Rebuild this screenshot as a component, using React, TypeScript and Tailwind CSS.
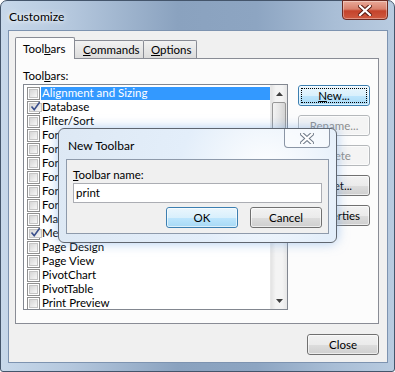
import React from "react";

const items: { name: string; checked?: boolean; selected?: boolean }[] = [
  { name: "Alignment and Sizing", selected: true },
  { name: "Database", checked: true },
  { name: "Filter/Sort" },
  { name: "Form Design" },
  { name: "Form View" },
  { name: "Formatting (Datasheet)" },
  { name: "Formatting (Form/Report)" },
  { name: "Formatting (Page)" },
  { name: "Formatting (PivotTable/PivotChart)" },
  { name: "Macro Design" },
  { name: "Menu Bar", checked: true },
  { name: "Page Design" },
  { name: "Page View" },
  { name: "PivotChart" },
  { name: "PivotTable" },
  { name: "Print Preview" },
];

function Check({ checked }: { checked?: boolean }) {
  return (
    <span className="w-[13px] h-[13px] shrink-0 border border-[#8f8f8f] bg-white p-[1px] flex">
      <span className="flex-1 border border-[#c4c4c4] bg-gradient-to-br from-[#d6d6d6] to-[#f7f7f7] flex items-center justify-center">
        {checked && (
          <svg width="11" height="11" viewBox="0 0 11 11" className="-mt-[1px]">
            <path d="M1.5 5.5 L4.2 8.6 L9.6 1.2" fill="none" stroke="#3a4f8c" strokeWidth="1.6" />
          </svg>
        )}
      </span>
    </span>
  );
}

function Btn({
  children,
  def,
  disabled,
  focus,
  w = "w-[72px]",
}: {
  children: React.ReactNode;
  def?: boolean;
  disabled?: boolean;
  focus?: boolean;
  w?: string;
}) {
  const border = disabled
    ? "border-[#b5b8bb]"
    : def
    ? "border-[#3c7fb1]"
    : "border-[#707070]";
  const bg = disabled
    ? "bg-[#f4f4f4]"
    : def
    ? "bg-[linear-gradient(#eaf6fd_0%,#d9f0fc_50%,#bee6fd_51%,#a7d9f5_100%)]"
    : "bg-[linear-gradient(#f2f2f2_0%,#ebebeb_50%,#dddddd_51%,#cfcfcf_100%)]";
  return (
    <div
      className={`${w} h-[21px] rounded-[3px] border ${border} ${bg} flex items-center justify-center relative ${
        disabled ? "text-[#8d8d8d]" : "text-black"
      }`}
    >
      <div className="absolute inset-0 rounded-[2px] border border-white/60" />
      {focus && <div className="absolute inset-[2px] border border-dotted border-black" />}
      <span className="relative leading-none text-[11.5px]">{children}</span>
    </div>
  );
}

function CloseX({ red }: { red?: boolean }) {
  return (
    <svg width="14" height="11" viewBox="0 0 14 11">
      <path
        d="M2 1 L12 10 M12 1 L2 10"
        stroke={red ? "#5a1b12" : "#6f7a88"}
        strokeWidth="4.2"
        strokeLinecap="square"
      />
      <path d="M2 1 L12 10 M12 1 L2 10" stroke="#ffffff" strokeWidth="2.2" strokeLinecap="square" />
    </svg>
  );
}

export default function App() {
  return (
    <div className="relative w-[395px] h-[372px] bg-white font-['Lato',sans-serif] text-[11px] text-black overflow-hidden">
      {/* main window */}
      <div className="w-full h-full rounded-t-[7px] rounded-b-[3px] border border-[#44556b] bg-[linear-gradient(90deg,#c7d8ea_0%,#b4c7dd_18%,#8aa2bf_45%,#8da5c2_65%,#a9bed6_85%,#b8cbe0_100%)] flex flex-col pl-[7px] pr-[6px] pb-[8px]">
        {/* title bar */}
        <div className="h-[29px] shrink-0 flex items-start">
          <span className="mt-[7px] ml-[1px] text-[12px] text-black [text-shadow:0_0_8px_#ffffff,0_0_4px_#ffffff]">
            Customize
          </span>
          <div className="ml-auto mr-[0px] -mt-[1px] w-[46px] h-[20px] rounded-b-[4px] border border-[#6b2a22] bg-[linear-gradient(#e9a999_0%,#d9816d_45%,#c4432b_55%,#cf5a40_100%)] flex items-center justify-center shadow-[inset_0_0_0_1px_rgba(255,255,255,0.35)]">
            <CloseX red />
          </div>
        </div>
        {/* client area */}
        <div className="flex-1 border border-[#7d93b0] bg-[#f0f0f0] flex flex-col px-[6px]">
          {/* tabs */}
          <div className="h-[21px] mt-[6px] flex items-end shrink-0 relative z-10">
            <div className="w-[60px] h-[22px] -mb-[1px] border border-b-0 border-[#898c95] bg-[#fcfcfc] rounded-t-[2px] flex items-start pl-[7px] pt-[4px]">
              <span className="leading-[13px] text-[11.5px]">
                Tool<span className="underline">b</span>ars
              </span>
            </div>
            <div className="w-[69px] h-[18px] border border-l-0 border-b-0 border-[#898c95] bg-[linear-gradient(#f2f2f2,#dcdcdc)] rounded-tr-[2px] flex items-start pl-[8px] pt-[2px]">
              <span className="leading-[13px] text-[11.5px]">
                <span className="underline">C</span>ommands
              </span>
            </div>
            <div className="w-[53px] h-[18px] border border-l-0 border-b-0 border-[#898c95] bg-[linear-gradient(#f2f2f2,#dcdcdc)] rounded-tr-[2px] flex items-start pl-[7px] pt-[2px]">
              <span className="leading-[13px] text-[11.5px]">
                <span className="underline">O</span>ptions
              </span>
            </div>
          </div>
          {/* panel */}
          <div className="w-[364px] h-[266px] border border-[#898c95] bg-[#fcfcfc] flex flex-col pl-[7px]">
            <div className="h-[25px] pt-[10px] leading-[13px] text-[11.5px]">
              Tool<span className="underline">b</span>ars:
            </div>
            <div className="flex">
              {/* list */}
              <div className="w-[265px] h-[226px] border border-[#828790] bg-white flex overflow-hidden">
                <div className="flex-1 pt-[1px] pl-[3px] flex flex-col overflow-hidden">
                  {items.map((it) => (
                    <div key={it.name} className="h-[14px] shrink-0 flex items-center">
                      <Check checked={it.checked} />
                      <span
                        className={`ml-[1px] h-[13px] flex items-center whitespace-nowrap pl-[1px] leading-none text-[11.5px] ${
                          it.selected ? "bg-[#3399ff] text-white flex-1" : ""
                        }`}
                      >
                        {it.name}
                      </span>
                    </div>
                  ))}
                </div>
                {/* scrollbar */}
                <div className="w-[17px] shrink-0 bg-[linear-gradient(90deg,#e3e3e3,#f4f4f4_30%,#f4f4f4_70%,#e6e6e6)] border-l border-[#e8e8e8] flex flex-col">
                  <div className="h-[17px] flex items-center justify-center">
                    <svg width="7" height="4" viewBox="0 0 7 4">
                      <path d="M0 4 L3.5 0 L7 4 Z" fill="#404040" />
                    </svg>
                  </div>
                  <div className="mx-[1px] h-[100px] rounded-[2px] border border-[#979797] bg-[linear-gradient(90deg,#f3f3f3,#e6e6e6_50%,#d3d3d3)]" />
                  <div className="flex-1" />
                  <div className="h-[17px] flex items-center justify-center">
                    <svg width="7" height="4" viewBox="0 0 7 4">
                      <path d="M0 0 L7 0 L3.5 4 Z" fill="#404040" />
                    </svg>
                  </div>
                </div>
              </div>
              {/* buttons */}
              <div className="ml-[10px] mt-[1px] flex flex-col gap-[9px]">
                <Btn def focus>
                  <span className="underline">N</span>ew...
                </Btn>
                <Btn disabled>
                  <span className="underline">R</span>ename...
                </Btn>
                <Btn disabled>
                  <span className="underline">D</span>elete
                </Btn>
                <Btn>
                  R<span className="underline">e</span>set...
                </Btn>
                <Btn>
                  <span className="underline">P</span>roperties
                </Btn>
              </div>
            </div>
          </div>
          {/* close */}
          <div className="flex justify-end mt-[10px] pr-[2px]">
            <Btn>Close</Btn>
          </div>
        </div>
      </div>

      {/* New Toolbar dialog */}
      <div className="absolute left-[58px] top-[128px] w-[279px] h-[115px] rounded-[6px] border border-[#5f6670] bg-[radial-gradient(circle_at_75%_40%,#ffffff_0%,#e3eefa_40%,#dde8f4_100%)] shadow-[0_0_12px_rgba(120,170,230,0.6)] flex flex-col px-[7px] pb-[8px]">
        <div className="h-[30px] shrink-0 flex items-start">
          <span className="mt-[8px] ml-[2px] text-[12px]">New Toolbar</span>
          <div className="ml-auto -mr-[1px] w-[46px] h-[19px] rounded-b-[4px] border border-t-0 border-[#8a95a5] bg-white/50 flex items-center justify-center">
            <CloseX />
          </div>
        </div>
        <div className="flex-1 border border-[#8e9aab] bg-[#f0f0f0] flex flex-col px-[6px]">
          <div className="h-[23px] pt-[8px] leading-[13px] text-[11.5px]">
            <span className="underline">T</span>oolbar name:
          </div>
          <div className="h-[20px] border border-[#abadb3] bg-white flex items-center pl-[2px] text-[11.5px]">print</div>
          <div className="flex justify-end gap-[12px] mt-[4px] pr-[0px]">
            <Btn def>OK</Btn>
            <Btn>Cancel</Btn>
          </div>
        </div>
      </div>
    </div>
  );
}
